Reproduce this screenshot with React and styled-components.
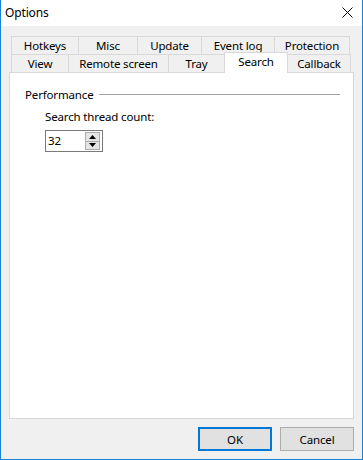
import React from 'react';
import styled, { createGlobalStyle } from 'styled-components';

const GlobalStyle = createGlobalStyle`
  html, body {
    margin: 0;
    padding: 0;
    background: #ffffff;
  }
  body {
    font-family: 'Noto Sans', 'Open Sans', sans-serif;
    font-size: 11.5px;
    letter-spacing: -0.15px;
    color: #000000;
  }
  * {
    box-sizing: border-box;
  }
`;

const Window = styled.div`
  width: 363px;
  height: 460px;
  display: flex;
  flex-direction: column;
  background: #f0f0f0;
  border-left: 1px solid #1883d7;
  border-right: 1px solid #1883d7;
  border-bottom: 1px solid #1883d7;
`;

const TitleBar = styled.div`
  height: 26px;
  flex: none;
  background: #ffffff;
  display: flex;
  align-items: center;
  justify-content: space-between;
  padding: 0 9px 1px 4px;
`;

const Title = styled.span`
  font-size: 12px;
  line-height: 16px;
`;

const CloseIcon = styled.svg`
  width: 11px;
  height: 11px;
  display: block;
`;

const Body = styled.div`
  flex: 1;
  display: flex;
  flex-direction: column;
  padding: 10px 8px 8px 8px;
`;

const TabRow = styled.div`
  display: flex;
  height: 18px;
  padding-left: 2px;
`;

const Tab = styled.div`
  flex: none;
  width: ${p => p.$w}px;
  height: ${p => (p.$active ? 21 : 18)}px;
  margin-left: -1px;
  margin-top: ${p => (p.$active ? -2 : 0)}px;
  border: 1px solid #d9d9d9;
  border-bottom: none;
  background: ${p => (p.$active ? '#ffffff' : '#f0f0f0')};
  display: flex;
  align-items: ${p => (p.$active ? 'flex-start' : 'center')};
  padding-top: ${p => (p.$active ? 1 : 0)}px;
  justify-content: center;
  line-height: 15px;
  white-space: nowrap;
  position: relative;
  z-index: ${p => (p.$active ? 2 : 1)};

  &:first-child {
    margin-left: 0;
  }
`;

const Panel = styled.div`
  height: 347px;
  flex: none;
  background: #ffffff;
  border: 1px solid #d9d9d9;
  padding: 14px 13px 0 15px;
  display: flex;
  flex-direction: column;
`;

const GroupHeader = styled.div`
  display: flex;
  align-items: center;
  gap: 5px;
  height: 16px;
`;

const GroupLabel = styled.span`
  line-height: 16px;
`;

const GroupLine = styled.div`
  flex: 1;
  height: 1px;
  background: #a0a0a0;
  margin-top: -1px;
`;

const Field = styled.div`
  display: flex;
  flex-direction: column;
  align-items: flex-start;
  padding-left: 20px;
  margin-top: 6px;
`;

const FieldLabel = styled.label`
  line-height: 16px;
  margin-bottom: 5px;
`;

const SpinBox = styled.div`
  width: 58px;
  height: 22px;
  border: 1px solid #7a7a7a;
  background: #ffffff;
  display: flex;
  align-items: center;
  padding: 0 2px 0 2px;
`;

const SpinValue = styled.span`
  flex: 1;
  line-height: 16px;
`;

const SpinButtons = styled.div`
  width: 15px;
  height: 18px;
  display: flex;
  flex-direction: column;
`;

const SpinButton = styled.div`
  flex: 1;
  background: #e5e5e5;
  border: 1px solid #acacac;
  margin-top: ${p => (p.$down ? -1 : 0)}px;
  display: flex;
  align-items: center;
  justify-content: center;
`;

const Arrow = styled.svg`
  width: 7px;
  height: 4px;
  display: block;
`;

const Footer = styled.div`
  display: flex;
  justify-content: flex-end;
  gap: 8px;
  margin-top: 8px;
`;

const Button = styled.button`
  width: 74px;
  height: 24px;
  padding: 0;
  font-family: 'Noto Sans', 'Open Sans', sans-serif;
  font-size: 11.5px;
  letter-spacing: -0.15px;
  color: #000000;
  background: #e1e1e1;
  border: ${p => (p.$default ? '2px solid #0078d7' : '1px solid #adadad')};
`;

const rowOne = [
  { label: 'Hotkeys', w: 68 },
  { label: 'Misc', w: 60 },
  { label: 'Update', w: 65 },
  { label: 'Event log', w: 74 },
  { label: 'Protection', w: 76 }
];

const rowTwo = [
  { label: 'View', w: 58 },
  { label: 'Remote screen', w: 101 },
  { label: 'Tray', w: 57 },
  { label: 'Search', w: 64, active: true },
  { label: 'Callback', w: 64 }
];

const App = () => (
  <>
    <GlobalStyle />
    <Window>
      <TitleBar>
        <Title>Options</Title>
        <CloseIcon viewBox="0 0 11 11">
          <path d="M0.5 0.5 L10.5 10.5 M10.5 0.5 L0.5 10.5" stroke="#000" strokeWidth="1" fill="none" />
        </CloseIcon>
      </TitleBar>
      <Body>
        <TabRow>
          {rowOne.map(t => (
            <Tab key={t.label} $w={t.w}>
              {t.label}
            </Tab>
          ))}
        </TabRow>
        <TabRow>
          {rowTwo.map(t => (
            <Tab key={t.label} $w={t.w} $active={t.active}>
              {t.label}
            </Tab>
          ))}
        </TabRow>
        <Panel>
          <GroupHeader>
            <GroupLabel>Performance</GroupLabel>
            <GroupLine />
          </GroupHeader>
          <Field>
            <FieldLabel>Search thread count:</FieldLabel>
            <SpinBox>
              <SpinValue>32</SpinValue>
              <SpinButtons>
                <SpinButton>
                  <Arrow viewBox="0 0 7 4">
                    <path d="M3.5 0 L7 4 L0 4 Z" fill="#000" />
                  </Arrow>
                </SpinButton>
                <SpinButton $down>
                  <Arrow viewBox="0 0 7 4">
                    <path d="M0 0 L7 0 L3.5 4 Z" fill="#000" />
                  </Arrow>
                </SpinButton>
              </SpinButtons>
            </SpinBox>
          </Field>
        </Panel>
        <Footer>
          <Button $default>OK</Button>
          <Button>Cancel</Button>
        </Footer>
      </Body>
    </Window>
  </>
);

export default App;
